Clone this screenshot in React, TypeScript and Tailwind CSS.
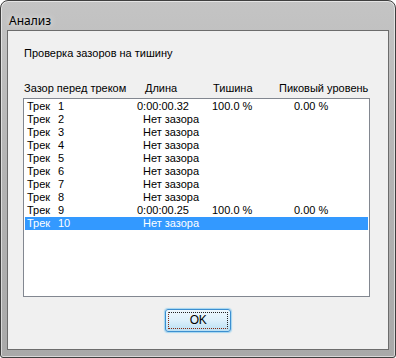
import React from "react";

type Row = { n: number; len: string; sil?: string; peak?: string; sel?: boolean };

const rows: Row[] = [
  { n: 1, len: "0:00:00.32", sil: "100.0 %", peak: "0.00 %" },
  { n: 2, len: "Нет зазора" },
  { n: 3, len: "Нет зазора" },
  { n: 4, len: "Нет зазора" },
  { n: 5, len: "Нет зазора" },
  { n: 6, len: "Нет зазора" },
  { n: 7, len: "Нет зазора" },
  { n: 8, len: "Нет зазора" },
  { n: 9, len: "0:00:00.25", sil: "100.0 %", peak: "0.00 %" },
  { n: 10, len: "Нет зазора", sel: true },
];

const App: React.FC = () => {
  return (
    <div className="w-[396px] h-[358px] bg-white">
      <div className="w-[396px] h-[358px] flex flex-col border border-[#3f3f3f] rounded-t-[8px] rounded-b-[3px] bg-gradient-to-b from-[#c4c4c4] via-[#b3b3b3] to-[#a9a9a9] shadow-[inset_0_0_0_1px_rgba(255,255,255,0.55)]">
        {/* title bar */}
        <div className="h-[29px] shrink-0 pl-[8px] pt-[6px]">
          <span className="text-[12px] leading-[16px] text-black [font-family:'Noto_Sans',sans-serif] [text-shadow:0_0_6px_rgba(255,255,255,0.9)]">
            Анализ
          </span>
        </div>

        {/* client area */}
        <div className="mx-[6px] h-[320px] border border-[#6c6c6c] bg-[#f0f0f0] flex flex-col pl-[15px] pt-[16px] text-[11px] leading-[13px] text-black [font-family:'Liberation_Sans',Arial,sans-serif]">
          <p className="pl-[1px] h-[13px]">Проверка зазоров на тишину</p>

          <div className="mt-[22px] h-[13px] flex pl-[1px] whitespace-nowrap">
            <span className="w-[121px]">Зазор перед треком</span>
            <span className="w-[68px]">Длина</span>
            <span className="w-[66px]">Тишина</span>
            <span>Пиковый уровень</span>
          </div>

          <div className="mt-[3px] w-[347px] h-[199px] border border-[#828790] bg-white p-[1px]">
            {rows.map((r) => (
              <div
                key={r.n}
                className={
                  "flex h-[13px] pl-[2px] whitespace-nowrap " +
                  (r.sel ? "bg-[#3399ff] text-white" : "text-black")
                }
              >
                <span className="w-[31px]">Трек</span>
                <span className="w-[79px]">{r.n}</span>
                <span className={"w-[75px] " + (r.sil ? "" : "pl-[6px]")}>{r.len}</span>
                <span className="w-[82px]">{r.sil ?? ""}</span>
                <span>{r.peak ?? ""}</span>
              </div>
            ))}
          </div>

          <div className="mt-[12px] flex justify-center pr-[15px]">
            <button className="relative w-[66px] h-[23px] rounded-[3px] border border-[#3c8fd0] shadow-[0_0_1px_1px_rgba(70,180,240,0.45)] bg-gradient-to-b from-[#eef8fd] via-[#dcf0fb] to-[#b9dff3] [font-family:'Liberation_Sans',Arial,sans-serif] text-[12px] leading-[21px] text-black">
              <span className="absolute inset-[2px] border border-dotted border-t-[#222] border-r-[#222] border-l-[#8a2a10] border-b-[#8a2a10]" />
              <span className="tracking-[-0.5px]">OK</span>
            </button>
          </div>
        </div>
      </div>
    </div>
  );
};

export default App;
